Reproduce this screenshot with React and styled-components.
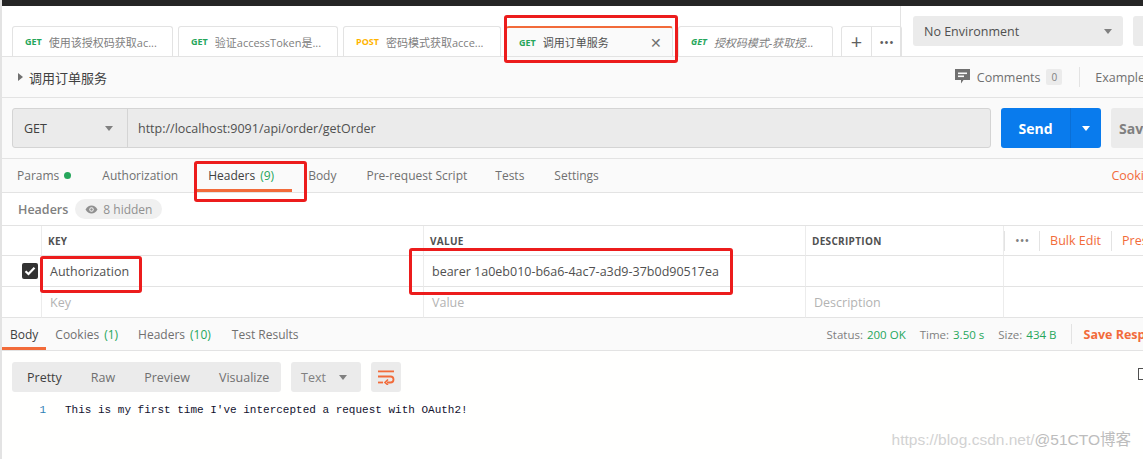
import React from "react";
import styled, { createGlobalStyle } from "styled-components";

const GlobalStyle = createGlobalStyle`
  html, body { margin: 0; padding: 0; background: #fff; }
  body {
    width: 1143px;
    height: 459px;
    overflow: hidden;
    font-family: "Open Sans", "Noto Sans CJK SC", sans-serif;
    font-size: 12px;
    color: #505050;
  }
`;

const Page = styled.div`
  position: relative;
  width: 1143px;
  height: 459px;
  overflow: hidden;
  border-left: 2px solid #e3e3e3;
  box-sizing: border-box;
`;

const TopStrip = styled.div`
  height: 6px;
  background: #262626;
  margin-left: -2px;
`;

const TabBar = styled.div`
  display: flex;
  height: 51px;
  background: #fff;
  border-bottom: 1px solid #e3e3e3;
  box-sizing: border-box;
`;

const Tabs = styled.div`
  display: flex;
  align-items: flex-end;
  gap: 5px;
  padding-left: 10px;
  width: 899px;
  flex-shrink: 0;
  border-right: 1px solid #e3e3e3;
  box-sizing: border-box;
`;

const Tab = styled.div`
  display: flex;
  align-items: center;
  flex-shrink: 0;
  width: ${(p) => p.$w}px;
  height: 30px;
  box-sizing: border-box;
  padding: 0 10px 0 12px;
  border: 1px solid #e3e3e3;
  border-bottom: none;
  border-top: ${(p) => (p.$active ? "2px solid #f26b3a" : "1px solid #e3e3e3")};
  border-radius: 3px 3px 0 0;
  background: ${(p) => (p.$active ? "#fafafa" : "#fff")};
  white-space: nowrap;
  overflow: hidden;
`;

const Method = styled.span`
  font-size: 9px;
  font-weight: 700;
  color: ${(p) => (p.$post ? "#ffb400" : "#26a65b")};
  margin-right: 7px;
  font-style: ${(p) => (p.$italic ? "italic" : "normal")};
`;

const TabTitle = styled.span`
  flex: 1;
  overflow: hidden;
  text-overflow: ellipsis;
  font-size: 11px;
  font-style: ${(p) => (p.$italic ? "italic" : "normal")};
  color: ${(p) => (p.$active ? "#505050" : "#808080")};
`;

const Close = styled.span`
  font-size: 14px;
  color: #707070;
  margin-left: 6px;
`;

const TabTools = styled.div`
  display: flex;
  flex-shrink: 0;
  height: 30px;
  margin-left: 3px;
  border: 1px solid #e3e3e3;
  border-bottom: none;
  border-radius: 3px 3px 0 0;
  box-sizing: border-box;
`;

const ToolBtn = styled.div`
  width: 29px;
  display: flex;
  align-items: center;
  justify-content: center;
  color: #606060;
  font-size: ${(p) => p.$size || 18}px;
  & + & { border-left: 1px solid #e3e3e3; }
`;

const EnvArea = styled.div`
  display: flex;
  align-items: center;
  gap: 10px;
  padding-left: 12px;
`;

const EnvSelect = styled.div`
  display: flex;
  align-items: center;
  justify-content: space-between;
  flex-shrink: 0;
  width: ${(p) => p.$w}px;
  height: 30px;
  box-sizing: border-box;
  padding: 0 11px;
  background: #ebebeb;
  border-radius: 3px;
  color: #505050;
  font-size: 12.5px;
`;

const Caret = styled.span`
  width: 0;
  height: 0;
  border-left: 4px solid transparent;
  border-right: 4px solid transparent;
  border-top: 5px solid ${(p) => p.$color || "#808080"};
`;

const TitleRow = styled.div`
  display: flex;
  align-items: center;
  height: 41px;
  background: #fafafa;
  border-bottom: 1px solid #e3e3e3;
  box-sizing: border-box;
  padding-left: 16px;
`;

const Arrow = styled.span`
  width: 0;
  height: 0;
  border-top: 4px solid transparent;
  border-bottom: 4px solid transparent;
  border-left: 5px solid #707070;
  margin-right: 6px;
`;

const Title = styled.div`
  font-size: 13px;
  color: #404040;
  flex: 1;
`;

const Comments = styled.div`
  display: flex;
  align-items: center;
  gap: 6px;
  flex-shrink: 0;
  color: #707070;
  font-size: 12.5px;
  padding-right: 17px;
  border-right: 1px solid #e3e3e3;
  height: 20px;
`;

const Badge = styled.span`
  background: #ebebeb;
  color: #808080;
  font-size: 10px;
  padding: 1px 5px;
  border-radius: 2px;
`;

const Examples = styled.div`
  flex-shrink: 0;
  color: #707070;
  font-size: 12.5px;
  padding-left: 15px;
  margin-right: -8px;
  white-space: nowrap;
`;

const UrlRow = styled.div`
  display: flex;
  align-items: center;
  height: 61px;
  background: #fafafa;
  border-bottom: 1px solid #e3e3e3;
  box-sizing: border-box;
  padding-left: 10px;
`;

const UrlBox = styled.div`
  display: flex;
  flex-shrink: 0;
  width: 979px;
  height: 40px;
  border: 1px solid #d4d4d4;
  border-radius: 3px;
  background: #ebebeb;
  box-sizing: border-box;
`;

const MethodSelect = styled.div`
  display: flex;
  align-items: center;
  justify-content: space-between;
  width: 115px;
  padding: 0 14px 0 11px;
  box-sizing: border-box;
  border-right: 1px solid #d4d4d4;
  font-size: 12.5px;
  color: #404040;
`;

const UrlText = styled.div`
  display: flex;
  align-items: center;
  padding-left: 10px;
  font-size: 12.5px;
  color: #505050;
`;

const SendBtn = styled.div`
  display: flex;
  flex-shrink: 0;
  margin-left: 10px;
  height: 40px;
  width: 100px;
  border-radius: 3px;
  background: #097bed;
  color: #fff;
`;

const SendLabel = styled.div`
  flex: 1;
  display: flex;
  align-items: center;
  justify-content: center;
  font-size: 14px;
  font-weight: 700;
  border-right: 1px solid #0a6fd6;
`;

const SendCaret = styled.div`
  width: 30px;
  display: flex;
  align-items: center;
  justify-content: center;
`;

const SaveBtn = styled.div`
  flex-shrink: 0;
  margin-left: 10px;
  height: 40px;
  width: 60px;
  border-radius: 3px;
  background: #ebebeb;
  color: #808080;
  font-size: 14px;
  font-weight: 700;
  display: flex;
  align-items: center;
  padding-left: 8px;
  box-sizing: border-box;
`;

const ReqTabs = styled.div`
  display: flex;
  align-items: stretch;
  height: 34px;
  background: #fafafa;
  border-bottom: 1px solid #e3e3e3;
  box-sizing: border-box;
  padding-left: 5px;
`;

const ReqTab = styled.div`
  display: flex;
  align-items: center;
  flex-shrink: 0;
  margin-left: ${(p) => p.$ml ?? 0}px;
  padding: 0 ${(p) => p.$pr ?? 0}px 0 ${(p) => p.$pl ?? 0}px;
  font-size: 12px;
  color: ${(p) => (p.$active ? "#404040" : "#707070")};
  box-shadow: ${(p) => (p.$active ? "inset 0 -3px 0 #f26b3a" : "none")};
  white-space: nowrap;
`;

const Count = styled.span`
  color: #26a65b;
  margin-left: 5px;
`;

const Dot = styled.span`
  width: 7px;
  height: 7px;
  border-radius: 50%;
  background: #26a65b;
  margin-left: 5px;
`;

const Orange = styled.div`
  flex-shrink: 0;
  color: #f26b3a;
  font-size: 12.5px;
  margin-left: ${(p) => (p.$auto ? "auto" : "0")};
  margin-right: ${(p) => p.$mr ?? 0}px;
  display: flex;
  align-items: center;
  padding-left: 12px;
  white-space: nowrap;
  font-weight: ${(p) => (p.$bold ? 700 : 400)};
`;

const HeadersLabel = styled.div`
  display: flex;
  align-items: center;
  height: 32px;
  padding-left: 16px;
  gap: 7px;
`;

const LabelText = styled.span`
  color: #808080;
  font-size: 12.5px;
  font-weight: 600;
`;

const Pill = styled.span`
  display: flex;
  align-items: center;
  gap: 5px;
  height: 20px;
  padding: 0 10px;
  border-radius: 10px;
  background: #f0f0f0;
  color: #909090;
  font-size: 12px;
`;

const Grid = styled.div`
  display: grid;
  grid-template-columns: 40px 382px 382px 198px 1fr;
  border-top: 1px solid #e3e3e3;
`;

const Cell = styled.div`
  height: ${(p) => (p.$head ? 30 : 31)}px;
  box-sizing: border-box;
  display: flex;
  align-items: center;
  padding-left: ${(p) => p.$pl ?? 6}px;
  border-bottom: 1px solid #e3e3e3;
  border-right: ${(p) => (p.$last ? "none" : "1px solid #ececec")};
  font-size: ${(p) => (p.$head ? 10 : 12.5)}px;
  font-weight: ${(p) => (p.$head ? 700 : 400)};
  color: ${(p) => (p.$head ? "#505050" : p.$muted ? "#b3b3b3" : "#505050")};
  letter-spacing: ${(p) => (p.$head ? "0.3px" : "0")};
  white-space: nowrap;
`;

const HeadTools = styled.div`
  display: flex;
  align-items: center;
  height: 100%;
  font-size: 12.5px;
  font-weight: 400;
  letter-spacing: 0;
`;

const HeadTool = styled.div`
  display: flex;
  align-items: center;
  height: 20px;
  padding: 0 ${(p) => p.$px ?? 10}px;
  color: ${(p) => (p.$orange ? "#f26b3a" : "#808080")};
  border-left: ${(p) => (p.$sep ? "1px solid #e3e3e3" : "none")};
`;

const Check = styled.span`
  width: 16px;
  height: 16px;
  border-radius: 2px;
  background: #333;
  display: flex;
  align-items: center;
  justify-content: center;
  margin-left: 20px;
`;

const RespTabs = styled(ReqTabs)`
  height: 33px;
  padding-left: 0;
`;

const Stat = styled.span`
  color: #808080;
  font-size: 11.5px;
  margin-right: 14px;
  white-space: nowrap;
`;

const StatVal = styled.span`
  color: #26a65b;
  margin-left: 4px;
`;

const StatusArea = styled.div`
  display: flex;
  align-items: center;
  flex-shrink: 0;
  margin-left: auto;
  margin-right: -32px;
`;

const StatSep = styled.span`
  width: 1px;
  height: 20px;
  background: #e3e3e3;
`;

const BodyArea = styled.div`
  background: #fffffe;
  padding: 11px 10px 0;
  height: 120px;
`;

const Toolbar = styled.div`
  display: flex;
  gap: 10px;
  height: 30px;
`;

const Segment = styled.div`
  display: flex;
  align-items: center;
  width: 269px;
  background: #ebebeb;
  border-radius: 3px;
  box-sizing: border-box;
`;

const SegItem = styled.div`
  padding: 0 14.5px;
  font-size: 12.5px;
  color: ${(p) => (p.$active ? "#404040" : "#707070")};
  &:first-child { padding-left: 15px; }
`;

const SelectBox = styled.div`
  display: flex;
  align-items: center;
  justify-content: space-between;
  width: 70px;
  background: #ebebeb;
  border-radius: 3px;
  padding: 0 14px 0 10px;
  box-sizing: border-box;
  color: #808080;
  font-size: 12.5px;
`;

const IconBox = styled.div`
  width: 30px;
  background: #ebebeb;
  border-radius: 3px;
  display: flex;
  align-items: center;
  justify-content: center;
`;

const CodeLine = styled.div`
  display: flex;
  margin-top: 10px;
  font-family: "Liberation Mono", "DejaVu Sans Mono", monospace;
  font-size: 11px;
  line-height: 16px;
`;

const LineNo = styled.span`
  width: 34px;
  text-align: right;
  color: #2f7fb5;
  margin-right: 19px;
`;

const Code = styled.span`
  color: #12122e;
`;

const Watermark = styled.div`
  position: absolute;
  right: 12px;
  bottom: 10px;
  font-family: "Liberation Sans", "Noto Sans CJK SC", sans-serif;
  font-size: 15.5px;
  color: #d2d2d2;
  white-space: nowrap;
`;

const WaterMark2 = styled.span`
  color: #bdbdbd;
`;

const RedBox = styled.div`
  position: absolute;
  border: 3px solid #ec1c1c;
  border-radius: 3px;
  box-sizing: border-box;
  pointer-events: none;
`;

const EdgeIcon = styled.div`
  position: absolute;
  right: 0;
  top: 368px;
  width: 5px;
  height: 12px;
  border: 1.5px solid #505050;
  border-right: none;
  box-sizing: border-box;
`;

const CommentIcon = () => (
  <svg width="17" height="18" viewBox="0 0 17 18">
    <path d="M1 1h15v11H9.5L7 15.5V12H1z" fill="#707070" />
    <rect x="4" y="4.5" width="9" height="1.6" fill="#fafafa" />
    <rect x="4" y="7.5" width="6" height="1.6" fill="#fafafa" />
  </svg>
);

const EyeIcon = () => (
  <svg width="13" height="9" viewBox="0 0 13 9">
    <path d="M0.5 4.5C2 1.8 4 0.5 6.5 0.5S11 1.8 12.5 4.5C11 7.2 9 8.5 6.5 8.5S2 7.2 0.5 4.5z" fill="#909090" />
    <circle cx="6.5" cy="4.5" r="2.2" fill="#f0f0f0" />
    <circle cx="6.5" cy="4.5" r="1.2" fill="#909090" />
  </svg>
);

const CheckMark = () => (
  <svg width="12" height="10" viewBox="0 0 12 10">
    <path d="M1.5 5.2L4.5 8 10.5 1.8" stroke="#fff" strokeWidth="2.2" fill="none" />
  </svg>
);

const WrapIcon = () => (
  <svg width="18" height="16" viewBox="0 0 18 16">
    <rect x="1" y="1.5" width="16" height="1.8" fill="#f26b3a" />
    <path d="M1 7.5h12.5a3 3 0 0 1 0 6H10" stroke="#f26b3a" strokeWidth="1.8" fill="none" />
    <path d="M11 10.5L8 13.5 11 16" stroke="#f26b3a" strokeWidth="1.6" fill="none" />
    <rect x="1" y="12.6" width="5" height="1.8" fill="#f26b3a" />
  </svg>
);

const tabs = [
  { m: "GET", t: "使用该授权码获取ac...", w: 161 },
  { m: "GET", t: "验证accessToken是...", w: 160 },
  { m: "POST", t: "密码模式获取acce...", w: 158 },
  { m: "GET", t: "调用订单服务", w: 167, active: true },
  { m: "GET", t: "授权码模式-获取授...", w: 155, italic: true },
];

export default function App() {
  return (
    <Page>
      <GlobalStyle />
      <TopStrip />
      <TabBar>
        <Tabs>
          {tabs.map((tab, i) => (
            <Tab key={i} $w={tab.w} $active={tab.active}>
              <Method $post={tab.m === "POST"} $italic={tab.italic}>{tab.m}</Method>
              <TabTitle $italic={tab.italic} $active={tab.active}>{tab.t}</TabTitle>
              {tab.active && <Close>✕</Close>}
            </Tab>
          ))}
          <TabTools>
            <ToolBtn $size={20}>+</ToolBtn>
            <ToolBtn $size={13}>•••</ToolBtn>
          </TabTools>
        </Tabs>
        <EnvArea>
          <EnvSelect $w={210}>
            No Environment
            <Caret />
          </EnvSelect>
          <EnvSelect $w={30} />
        </EnvArea>
      </TabBar>

      <TitleRow>
        <Arrow />
        <Title>调用订单服务</Title>
        <Comments>
          <CommentIcon />
          Comments
          <Badge>0</Badge>
        </Comments>
        <Examples>Examples</Examples>
      </TitleRow>

      <UrlRow>
        <UrlBox>
          <MethodSelect>
            GET
            <Caret />
          </MethodSelect>
          <UrlText>http://localhost:9091/api/order/getOrder</UrlText>
        </UrlBox>
        <SendBtn>
          <SendLabel>Send</SendLabel>
          <SendCaret>
            <Caret $color="#fff" />
          </SendCaret>
        </SendBtn>
        <SaveBtn>Save</SaveBtn>
      </UrlRow>

      <ReqTabs>
        <ReqTab $ml={10}>
          Params<Dot />
        </ReqTab>
        <ReqTab $ml={31}>Authorization</ReqTab>
        <ReqTab $active $ml={18} $pl={12} $pr={18}>
          Headers<Count>(9)</Count>
        </ReqTab>
        <ReqTab $ml={16}>Body</ReqTab>
        <ReqTab $ml={30}>Pre-request Script</ReqTab>
        <ReqTab $ml={28}>Tests</ReqTab>
        <ReqTab $ml={30}>Settings</ReqTab>
        <Orange $auto $mr={-14}>Cookies</Orange>
      </ReqTabs>

      <HeadersLabel>
        <LabelText>Headers</LabelText>
        <Pill>
          <EyeIcon />
          8 hidden
        </Pill>
      </HeadersLabel>

      <Grid>
        <Cell $head />
        <Cell $head>KEY</Cell>
        <Cell $head>VALUE</Cell>
        <Cell $head>DESCRIPTION</Cell>
        <Cell $head $last $pl={0}>
          <HeadTools>
            <HeadTool $sep $px={10}>•••</HeadTool>
            <HeadTool $sep $orange>Bulk Edit</HeadTool>
            <HeadTool $sep $orange>Presets</HeadTool>
          </HeadTools>
        </Cell>

        <Cell $pl={0}>
          <Check>
            <CheckMark />
          </Check>
        </Cell>
        <Cell $pl={8}>Authorization</Cell>
        <Cell $pl={8}>bearer 1a0eb010-b6a6-4ac7-a3d9-37b0d90517ea</Cell>
        <Cell />
        <Cell $last />

        <Cell />
        <Cell $pl={8} $muted>Key</Cell>
        <Cell $pl={8} $muted>Value</Cell>
        <Cell $pl={8} $muted>Description</Cell>
        <Cell $last />
      </Grid>

      <RespTabs>
        <ReqTab $active $pl={8} $pr={8}>Body</ReqTab>
        <ReqTab $ml={9}>
          Cookies<Count>(1)</Count>
        </ReqTab>
        <ReqTab $ml={20}>
          Headers<Count>(10)</Count>
        </ReqTab>
        <ReqTab $ml={21}>Test Results</ReqTab>
        <StatusArea>
          <Stat>
            Status:<StatVal>200 OK</StatVal>
          </Stat>
          <Stat>
            Time:<StatVal>3.50 s</StatVal>
          </Stat>
          <Stat>
            Size:<StatVal>434 B</StatVal>
          </Stat>
          <StatSep />
          <Orange $bold>Save Response</Orange>
        </StatusArea>
      </RespTabs>

      <BodyArea>
        <Toolbar>
          <Segment>
            <SegItem $active>Pretty</SegItem>
            <SegItem>Raw</SegItem>
            <SegItem>Preview</SegItem>
            <SegItem>Visualize</SegItem>
          </Segment>
          <SelectBox>
            Text
            <Caret />
          </SelectBox>
          <IconBox>
            <WrapIcon />
          </IconBox>
        </Toolbar>
        <CodeLine>
          <LineNo>1</LineNo>
          <Code>This is my first time I've intercepted a request with OAuth2!</Code>
        </CodeLine>
      </BodyArea>

      <EdgeIcon />
      <Watermark>
        https://blog.csdn.net/<WaterMark2>@51CTO博客</WaterMark2>
      </Watermark>

      <RedBox style={{ left: 502, top: 15, width: 174, height: 48 }} />
      <RedBox style={{ left: 192, top: 161, width: 113, height: 41 }} />
      <RedBox style={{ left: 38, top: 256, width: 102, height: 37 }} />
      <RedBox style={{ left: 407, top: 248, width: 324, height: 47 }} />
    </Page>
  );
}
